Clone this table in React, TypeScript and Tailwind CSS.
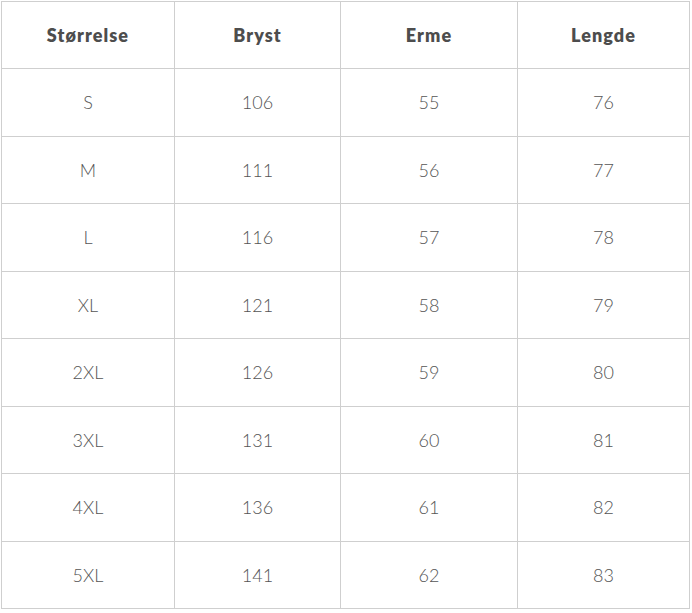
import React from 'react';

const headers = ['Størrelse', 'Bryst', 'Erme', 'Lengde'];

const rows: [string, number, number, number][] = [
  ['S', 106, 55, 76],
  ['M', 111, 56, 77],
  ['L', 116, 57, 78],
  ['XL', 121, 58, 79],
  ['2XL', 126, 59, 80],
  ['3XL', 131, 60, 81],
  ['4XL', 136, 61, 82],
  ['5XL', 141, 62, 83],
];

export default function App() {
  return (
    <div className="w-[692px] h-[613px] bg-white pt-px pl-px" style={{ fontFamily: 'Lato, "Open Sans", sans-serif' }}>
      <table className="w-[688px] table-fixed border-collapse text-center">
        <colgroup>
          <col className="w-[173px]" />
          <col className="w-[166px]" />
          <col className="w-[177px]" />
          <col className="w-[172px]" />
        </colgroup>
        <thead>
          <tr className="h-[67px]">
            {headers.map((h) => (
              <th key={h} className="border border-[#cfcfcf] p-0 text-[18px] font-extrabold tracking-[0.06em] text-[#4d4d4d]">
                {h}
              </th>
            ))}
          </tr>
        </thead>
        <tbody>
          {rows.map((r, i) => (
            <tr key={r[0]} className={i % 2 === 0 ? 'h-[68px]' : 'h-[67px]'}>
              {r.map((c, j) => (
                <td key={j} className="border border-[#cfcfcf] p-0 text-[18px] font-light text-[#555]">
                  {c}
                </td>
              ))}
            </tr>
          ))}
        </tbody>
      </table>
    </div>
  );
}
